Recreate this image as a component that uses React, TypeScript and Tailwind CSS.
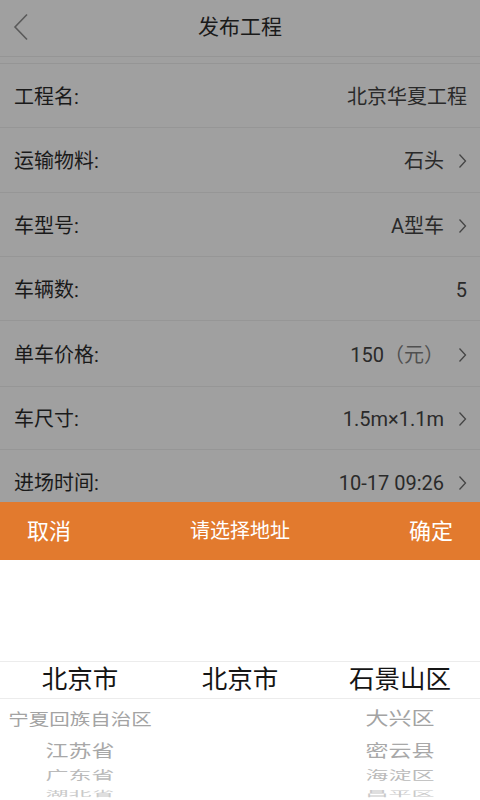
import React from "react";

const rows: { label: string; value: string; unit?: string; arrow: boolean; h: string }[] = [
  { label: "工程名:", value: "北京华夏工程", arrow: false, h: "h-[64px]" },
  { label: "运输物料:", value: "石头", arrow: true, h: "h-[65px]" },
  { label: "车型号:", value: "A型车", arrow: true, h: "h-[64px]" },
  { label: "车辆数:", value: "5", arrow: false, h: "h-[64px]" },
  { label: "单车价格:", value: "150", unit: "（元）", arrow: true, h: "h-[66px]" },
  { label: "车尺寸:", value: "1.5m×1.1m", arrow: true, h: "h-[63px]" },
  { label: "进场时间:", value: "10-17 09:26", arrow: true, h: "h-[64px]" },
];

const Chevron = () => (
  <svg width="9" height="16" viewBox="0 0 9 16" className="ml-[14px]">
    <path d="M1.5 1.5 L7.5 8 L1.5 14.5" fill="none" stroke="#454545" strokeWidth="1.3" />
  </svg>
);

// unselected wheel items below the selection line
const wheel = [
  { h: "h-[40px]", left: "宁夏回族自治区", right: "大兴区", lsize: "text-[20.5px]", scale: "scale-y-[0.8]", color: "text-[#a3a3a3]" },
  { h: "h-[24px]", left: "江苏省", right: "密云县", lsize: "text-[23px]", scale: "scale-y-[0.72]", color: "text-[#a8a8a8]" },
  { h: "h-[26px]", left: "广东省", right: "海淀区", lsize: "text-[23px]", scale: "scale-y-[0.52]", color: "text-[#bababa]" },
  { h: "h-[8px]", left: "湖北省", right: "昌平区", lsize: "text-[23px]", scale: "scale-y-[0.3]", color: "text-[#cacaca]" },
];

export default function App() {
  return (
    <div
      className="relative h-[800px] w-[480px] overflow-hidden bg-[#a0a0a0]"
      style={{ fontFamily: 'Roboto, "Noto Sans CJK SC", sans-serif' }}
    >
      {/* Header */}
      <div className="relative flex h-[57px] items-center justify-center border-b border-[#959595]">
        <svg width="16" height="28" viewBox="0 0 16 28" className="absolute left-[13px] top-[13px]">
          <path d="M14 1.5 L2 14 L14 26.5" fill="none" stroke="#5a5a5a" strokeWidth="1.6" />
        </svg>
        <span className="text-[21px] text-[#1a1a1a]">发布工程</span>
      </div>
      <div className="h-[7px] border-b border-[#959595]" />

      {/* Form rows */}
      <div className="flex flex-col">
        {rows.map((r) => (
          <div
            key={r.label}
            className={`flex ${r.h} shrink-0 items-center justify-between border-b border-[#969696] pl-[14px] pr-[13px] pt-[2px]`}
          >
            <span className="text-[20px] text-[#1a1a1a]">{r.label}</span>
            <span className="flex items-center text-[20px] text-[#2a2a2a]">
              {r.value}
              {r.unit && <span className="text-[#505050]">{r.unit}</span>}
              {r.arrow && <Chevron />}
            </span>
          </div>
        ))}
      </div>

      {/* Address picker sheet */}
      <div className="absolute bottom-0 left-0 right-0 flex h-[298px] flex-col bg-white">
        <div className="flex h-[58px] shrink-0 items-center justify-between bg-[#e27a2e] px-[27px] text-white">
          <span className="text-[22px]">取消</span>
          <span className="text-[20px]">请选择地址</span>
          <span className="text-[22px]">确定</span>
        </div>
        <div className="h-[101px] shrink-0" />
        <div className="flex h-[38px] shrink-0 items-center border-y border-[#ececec] text-[25.5px] leading-none text-[#151515]">
          <span className="w-1/3 text-center">北京市</span>
          <span className="w-1/3 text-center">北京市</span>
          <span className="w-1/3 text-center">石景山区</span>
        </div>
        {wheel.map((w) => (
          <div key={w.left} className={`flex ${w.h} shrink-0 items-center leading-none ${w.color}`}>
            <span className={`block w-1/3 text-center ${w.lsize} ${w.scale}`}>{w.left}</span>
            <span className="w-1/3" />
            <span className={`block w-1/3 text-center text-[23px] ${w.scale}`}>{w.right}</span>
          </div>
        ))}
      </div>
    </div>
  );
}
